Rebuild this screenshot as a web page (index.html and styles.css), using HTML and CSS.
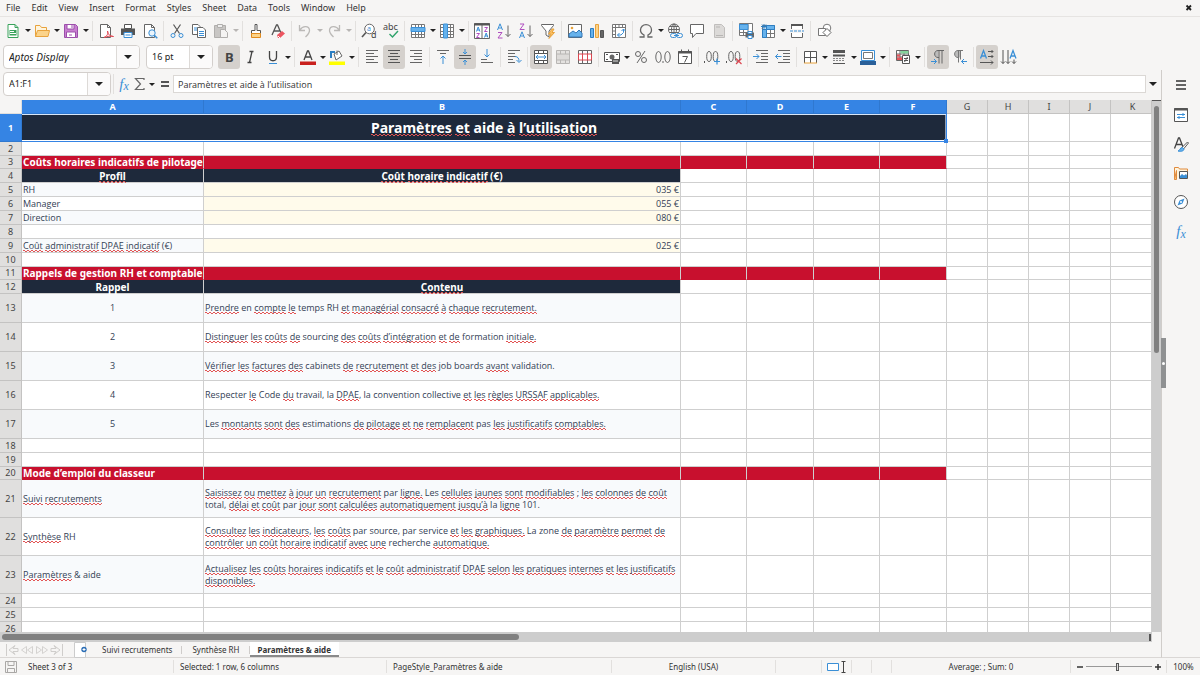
FILE: index.html
```html
<!DOCTYPE html>
<html lang="en">
<head>
<meta charset="utf-8">
<meta name="viewport" content="width=device-width, initial-scale=1">
<title>Paramètres &amp; aide</title>
<link rel="stylesheet" href="styles.css">
</head>
<body>
<div class="app">
<nav class="menubar" aria-label="Menu">
<button>File</button><button>Edit</button><button>View</button><button>Insert</button><button>Format</button><button>Styles</button><button>Sheet</button><button>Data</button><button>Tools</button><button>Window</button><button>Help</button>
<button class="close" aria-label="Close document"><svg viewBox="0 0 8 8" width="8" height="8"><path d="M1.500 1.500l4.500 4.500M6 1.500L1.500 6" stroke="#222" stroke-width="1.800"/></svg></button>
</nav>

<div class="toolbar" role="toolbar" aria-label="Standard">
<span class="split"><button class="tool" aria-label="New"><svg viewBox="0 0 16 16"><path d="M3 1.500h7l3 3v10H3z" fill="#fff" stroke="#3aa35c"/><path d="M10 1.500v3h3" fill="none" stroke="#3aa35c"/><path d="M4.500 7h7v5.500h-7z" fill="#3aa35c"/><path d="M5 8.500h4M5 10.500h6" stroke="#fff"/></svg></button><button class="caret" aria-label="New options"></button></span>
<span class="split"><button class="tool" aria-label="Open"><svg viewBox="0 0 16 16"><path d="M1.500 13.500v-11h4.500l1.500 2h5v3" fill="#fff4dc" stroke="#e8a33d"/><path d="M3.500 7.500h12l-1.500 6H1.500z" fill="#fbd38a" stroke="#e8a33d"/></svg></button><button class="caret" aria-label="Open options"></button></span>
<span class="split"><button class="tool" aria-label="Save"><svg viewBox="0 0 16 16"><path d="M1.500 1.500h11l2 2v11h-13z" fill="#c77ed0" stroke="#9c4fab"/><path d="M4 1.500h7v4.500H4zM3.500 9h9v5.500h-9z" fill="#fff" stroke="#9c4fab"/><path d="M9 2v3M6 12h3" stroke="#9c4fab"/></svg></button><button class="caret" aria-label="Save options"></button></span>
<span class="sep"></span>
<button class="tool" aria-label="Export as PDF"><svg viewBox="0 0 16 16"><path d="M2.500 1.500h7l3 3v10h-10z" fill="#fff" stroke="#666"/><path d="M9.500 1.500v3h3" fill="none" stroke="#666"/><path d="M6 14.500c4-2 4-4 3.500-6.500 1 4 2 5 6 5.500-3-1-6 0-9.500 1z" fill="#fff" stroke="#e0444f"/></svg></button>
<button class="tool" aria-label="Print"><svg viewBox="0 0 16 16"><path d="M4.500 1.500h7v4h-7z" fill="#fff" stroke="#555"/><path d="M1 5.500h14v6.500H1z" fill="#555"/><path d="M4 9.500h8v5H4z" fill="#fff" stroke="#3a8fd6"/><path d="M5.500 12h5" stroke="#3a8fd6"/></svg></button>
<button class="tool" aria-label="Print preview"><svg viewBox="0 0 16 16"><path d="M2.500 1.500h7l3 3v10h-10z" fill="#fff" stroke="#666"/><path d="M9.500 1.500v3h3" fill="none" stroke="#666"/><circle cx="10" cy="10" r="3.200" fill="#eaf4fc" stroke="#3a8fd6"/><path d="M12.300 12.300l3 3" stroke="#3a8fd6" stroke-width="1.500"/></svg></button>
<span class="sep"></span>
<button class="tool" aria-label="Cut"><svg viewBox="0 0 16 16"><path d="M4.500 1.500l6 9M11.500 1.500l-6 9" stroke="#555" stroke-width="1.200"/><circle cx="4" cy="12.500" r="2" fill="none" stroke="#3a8fd6"/><circle cx="12" cy="12.500" r="2" fill="none" stroke="#3a8fd6"/></svg></button>
<button class="tool" aria-label="Copy"><svg viewBox="0 0 16 16"><path d="M1.500 1.500h5.500l2 2v8h-7.500z" fill="#fff" stroke="#666"/><path d="M3 5h5M3 7h5" stroke="#3a8fd6"/><path d="M6.500 4.500h5.500l2.500 2.500v7.500h-8z" fill="#fff" stroke="#666"/><path d="M8 8.500h5M8 10.500h5M8 12.500h5" stroke="#3a8fd6"/></svg></button>
<span class="split off"><button class="tool" aria-label="Paste"><svg viewBox="0 0 16 16"><path d="M1.500 2.500h11v12h-11z" fill="#c8c6c4" stroke="#b0aeac"/><path d="M4.500 1.500h5v3h-5z" fill="#eee" stroke="#b0aeac"/><path d="M7.500 6.500h4l3 3v5h-7z" fill="#f4f3f2" stroke="#b0aeac"/></svg></button><button class="caret" aria-label="Paste options"></button></span>
<span class="sep"></span>
<button class="tool" aria-label="Clone formatting"><svg viewBox="0 0 16 16"><path d="M7 1.500h2v6h3.500v3h-9v-3H7z" fill="#fff" stroke="#555"/><path d="M3.500 10.500h9v4h-9z" fill="#fbd38a" stroke="#e08a1e"/></svg></button>
<button class="tool" aria-label="Clear direct formatting"><svg viewBox="0 0 16 16"><path d="M2 12L6.500 2h1L11 10M4 8h5.500" fill="none" stroke="#555" stroke-width="1.300"/><path d="M7 12l5-4 3 2.500-5 4.500H8z" fill="#ec5560"/><path d="M8 13l2 2" stroke="#fff"/></svg></button>
<span class="sep"></span>
<span class="split off"><button class="tool" aria-label="Undo"><svg viewBox="0 0 16 16"><path d="M2.500 2v5.500H8M3 7c3-5 9-4 9.500 0 .3 3-2 5-4 7" fill="none" stroke="#bbb9b7" stroke-width="1.300"/></svg></button><button class="caret" aria-label="Undo history"></button></span>
<span class="split off"><button class="tool" aria-label="Redo"><svg viewBox="0 0 16 16"><path d="M13.500 2v5.500H8M13 7C10 2 4 3 3.500 7c-.3 3 2 5 4 7" fill="none" stroke="#bbb9b7" stroke-width="1.300"/></svg></button><button class="caret" aria-label="Redo history"></button></span>
<span class="sep"></span>
<button class="tool" aria-label="Find and replace"><svg viewBox="0 0 16 16"><circle cx="8.500" cy="6" r="4.800" fill="#fff" stroke="#666"/><path d="M5 9.500L1 14" stroke="#555" stroke-width="1.600"/><text x="6" y="8" class="ic-s blue">a</text><text x="10" y="15" class="ic-m">d</text></svg></button>
<button class="tool" aria-label="Spelling"><svg viewBox="0 0 16 16"><text x="0" y="7" class="ic-m">abc</text><path d="M6.500 11l3 3L15 8" fill="none" stroke="#2fa36b" stroke-width="1.400"/></svg></button>
<span class="sep"></span>
<span class="split"><button class="tool" aria-label="Row"><svg viewBox="0 0 16 16"><path d="M1.500 1.500h13v13h-13zM1.500 11.500h13M5.500 1.500v13M8.500 1.500v13M11.500 1.500v13" fill="#fff" stroke="#777"/><path d="M1 4.500h14v4H1z" fill="#66b2ec" stroke="#3a8fd6"/></svg></button><button class="caret" aria-label="Row options"></button></span>
<span class="split"><button class="tool" aria-label="Column"><svg viewBox="0 0 16 16"><path d="M1.500 1.500h13v13h-13zM1.500 4.500h13M1.500 8.500h13M1.500 11.500h13M11.500 1.500v13" fill="#fff" stroke="#777"/><path d="M4.500 1h4v14h-4z" fill="#66b2ec" stroke="#3a8fd6"/></svg></button><button class="caret" aria-label="Column options"></button></span>
<span class="sep"></span>
<button class="tool" aria-label="Sort"><svg viewBox="0 0 16 16"><path d="M.5.500h15v15H.5zM8 2v13.500" fill="#fff" stroke="#666"/><path d="M0 1.500h16" stroke="#555" stroke-width="2"/><path d="M2.500 8.500L4.200 4l1.700 4.500M3 7h2.500M10.500 14.500l1.700-4.500 1.700 4.500M11 13h2.500" fill="none" stroke="#3a8fd6"/><path d="M2.500 10.500h3l-3 4h3M10.500 4.500h3l-3 4h3" fill="none" stroke="#b04fc0"/></svg></button>
<button class="tool" aria-label="Sort ascending"><svg viewBox="0 0 16 16"><path d="M1.500 7L4 .8 6.500 7M2.500 5h3" fill="none" stroke="#3a8fd6"/><path d="M2 9.500h4l-4 5.500h4.500" fill="none" stroke="#b04fc0"/><path d="M12 2.500v11M9.500 11l2.500 2.500 2.500-2.500" fill="none" stroke="#666"/></svg></button>
<button class="tool" aria-label="Sort descending"><svg viewBox="0 0 16 16"><path d="M2 1h4L2 6.500h4.500" fill="none" stroke="#b04fc0"/><path d="M1.500 15L4 8.800 6.500 15M2.500 13h3" fill="none" stroke="#3a8fd6"/><path d="M12 2.500v11M9.500 11l2.500 2.500 2.500-2.500" fill="none" stroke="#666"/></svg></button>
<button class="tool" aria-label="AutoFilter"><svg viewBox="0 0 16 16"><path d="M1.500 1.500h12v1L9 8v6l-3-2V8L1.500 2.500z" fill="#fff" stroke="#666"/><path d="M12 6l-3.500 5h2.500L9 15.500l5.500-6H12l2-3.500z" fill="#fbc063" stroke="#e8a33d"/></svg></button>
<span class="sep"></span>
<button class="tool" aria-label="Insert image"><svg viewBox="0 0 16 16"><path d="M1.500 1.500h13v13h-13z" fill="#fff" stroke="#666"/><circle cx="5" cy="5" r="1.300" fill="#e8a33d"/><path d="M2 14v-3l4-3 3 2 3-3 3 3v4z" fill="#66b2ec" stroke="#3478b8"/></svg></button>
<button class="tool" aria-label="Insert chart"><svg viewBox="0 0 16 16"><path d="M1.500 5.500h3v9h-3z" fill="#66b2ec" stroke="#2d7ec2"/><path d="M6.500 1.500h3v13h-3z" fill="#fbd38a" stroke="#e8a33d"/><path d="M11.500 7.500h3v7h-3z" fill="#666" stroke="#555"/></svg></button>
<button class="tool" aria-label="Pivot table"><svg viewBox="0 0 16 16"><path d="M1.500 1.500h13v13h-13zM4.500 1.500v13M1.500 4.500h13M8 1.500v3M11.500 1.500v3M1.500 8h3M1.500 11.500h3" fill="#fff" stroke="#777"/><path d="M6.500 12h3.500l2.500-2.500V6M8.500 10l-2 2 2 2M10.500 8l2-2 2 2" fill="none" stroke="#3a8fd6"/></svg></button>
<span class="sep"></span>
<span class="split"><button class="tool" aria-label="Special character"><svg viewBox="0 0 16 16"><path d="M1.500 14h4.500v-2C3 10.500 2.500 8.500 2.500 7c0-3 2.300-5.300 5.500-5.300S13.500 4 13.500 7c0 1.500-.5 3.500-3.500 5v2h4.500" fill="none" stroke="#666" stroke-width="1.300"/></svg></button><button class="caret" aria-label="Special character options"></button></span>
<button class="tool" aria-label="Hyperlink"><svg viewBox="0 0 16 16"><circle cx="7" cy="6.500" r="5.500" fill="#fff" stroke="#666"/><path d="M1.500 6.500h11M7 1v11M2.500 3.500h9M2.500 9.500h9" stroke="#666"/><ellipse cx="7" cy="6.500" rx="2.500" ry="5.500" fill="none" stroke="#666"/><rect x="3" y="10" width="13" height="5" fill="#f6f5f4"/><rect x="3.500" y="10.500" width="6" height="4" rx="2" fill="none" stroke="#3a8fd6"/><rect x="9.500" y="10.500" width="6" height="4" rx="2" fill="none" stroke="#3a8fd6"/><path d="M7 12.500h5" stroke="#3a8fd6"/></svg></button>
<button class="tool" aria-label="Comment"><svg viewBox="0 0 16 16"><path d="M1.500 1.500h13v9H7l-3.500 4v-4h-2z" fill="#fff" stroke="#666"/></svg></button>
<button class="tool off" aria-label="Headers and footers"><svg viewBox="0 0 16 16"><path d="M3.500 1.500h7l3 3v10h-10z" fill="#dcdad8" stroke="#c0bebc"/><path d="M5 4h4M5 12.500h7" stroke="#b8b6b4"/></svg></button>
<span class="sep"></span>
<button class="tool" aria-label="Define print area"><svg viewBox="0 0 16 16"><path d="M1.500.500h13v12h-13zM5.500.500v12M10 .5v12M1.500 9.500h13" fill="#fff" stroke="#777"/><path d="M1.500 1.500h8.500v5H1.500z" fill="#66b2ec" stroke="#3a8fd6"/><path d="M7.500 9.500h8.500v5H7.500z" fill="#666"/><path d="M10 8.500h4v2h-4zM10 12.500h4v3h-4z" fill="#fff" stroke="#3a8fd6"/></svg></button>
<span class="split"><button class="tool" aria-label="Freeze rows and columns"><svg viewBox="0 0 16 16"><path d="M2.500 2.500h12v12h-12zM6.500 6.500h8M6.500 10.500h8M10.500 2.500v12" fill="#fff" stroke="#777"/><path d="M2.500 6.500h4v8h-4zM6.500 2.500h8v4h-8z" fill="#66b2ec" stroke="#2d7ec2"/><path d="M4 1v5M1 3.500h5M2 1.500l4 4M6 1.500l-4 4" stroke="#2d7ec2"/></svg></button><button class="caret" aria-label="Freeze options"></button></span>
<button class="tool" aria-label="Split window"><svg viewBox="0 0 16 16"><path d="M2.500 6V1.500h11V6M2.500 10v4.500h11V10" fill="#fff" stroke="#666"/><path d="M2 2h12" stroke="#555" stroke-width="2"/><path d="M1 8h14" stroke="#3a8fd6" stroke-dasharray="3 1"/></svg></button>
<span class="sep"></span>
<button class="tool" aria-label="Show draw functions"><svg viewBox="0 0 16 16"><circle cx="11" cy="5" r="3.800" fill="#fff" stroke="#777"/><path d="M2.500 5.500h7v7h-7z" fill="#fff" stroke="#777"/><path d="M11 5.500l4 4-4 4-4-4z" fill="#fff" stroke="#666"/></svg></button>
</div>

<div class="toolbar second" role="toolbar" aria-label="Formatting">
<span class="combo font"><input aria-label="Font name" value="Aptos Display"><button aria-label="Choose font"></button></span>
<span class="combo size"><input aria-label="Font size" value="16 pt"><button aria-label="Choose size"></button></span>
<button class="tool on" aria-label="Bold"><svg viewBox="0 0 16 16"><text x="4" y="13" class="ic-l bold">B</text></svg></button>
<button class="tool" aria-label="Italic"><svg viewBox="0 0 16 16"><path d="M6.500 2.500h4M4.500 13.500h4M9 2.500l-2.500 11" stroke="#444" stroke-width="1.300"/></svg></button>
<span class="split"><button class="tool" aria-label="Underline"><svg viewBox="0 0 16 16"><path d="M4.500 2v6c0 5 7 5 7 0V2" fill="none" stroke="#444" stroke-width="1.300"/><path d="M4 14.500h8" stroke="#3a8fd6"/></svg></button><button class="caret" aria-label="Underline options"></button></span>
<span class="sep"></span>
<span class="split"><button class="tool" aria-label="Font color"><svg viewBox="0 0 16 16"><path d="M4 11l3.500-9h1L12 11M5.500 8h5" fill="none" stroke="#444" stroke-width="1.300"/><path d="M0 12.500h16v3.500H0z" fill="#c9211e"/></svg></button><button class="caret" aria-label="Font color options"></button></span>
<span class="split"><button class="tool" aria-label="Background color"><svg viewBox="0 0 16 16"><path d="M5 5l5-3 3 5-6 4z" fill="#fff" stroke="#666"/><path d="M8 6V1.500" stroke="#666"/><path d="M2 9V3h4" fill="none" stroke="#2d7ec2" stroke-width="2"/><path d="M0 12.500h16v3.500H0z" fill="#ff0"/></svg></button><button class="caret" aria-label="Background color options"></button></span>
<span class="sep"></span>
<button class="tool" aria-label="Align left"><svg viewBox="0 0 16 16"><path d="M2 1.500h12M2 4.500h8M2 7.500h12M2 10.500h8M2 13.500h12" stroke="#666"/></svg></button>
<button class="tool on" aria-label="Align center"><svg viewBox="0 0 16 16"><path d="M2 1.500h12M4 4.500h8M2 7.500h12M4 10.500h8M2 13.500h12" stroke="#555"/></svg></button>
<button class="tool" aria-label="Align right"><svg viewBox="0 0 16 16"><path d="M2 1.500h12M6 4.500h8M2 7.500h12M6 10.500h8M2 13.500h12" stroke="#666"/></svg></button>
<span class="sep"></span>
<button class="tool" aria-label="Align top"><svg viewBox="0 0 16 16"><path d="M2 1.500h12M5 4.500h6" stroke="#666"/><path d="M8 15V7M5.500 9.500L8 7l2.500 2.500" fill="none" stroke="#3a8fd6"/></svg></button>
<button class="tool on" aria-label="Center vertically"><svg viewBox="0 0 16 16"><path d="M2 6.500h12M2 9.500h12" stroke="#555"/><path d="M8 0v5M6 3l2 2 2-2M8 16v-5M6 13l2-2 2 2" fill="none" stroke="#3a8fd6"/></svg></button>
<button class="tool" aria-label="Align bottom"><svg viewBox="0 0 16 16"><path d="M2 10.500h6M2 13.500h12" stroke="#666"/><path d="M8 0v8M5.500 5.500L8 8l2.500-2.500" fill="none" stroke="#3a8fd6"/></svg></button>
<span class="sep"></span>
<button class="tool" aria-label="Wrap text"><svg viewBox="0 0 16 16"><path d="M2 1.500h12M2 4.500h7M2 7.500h8M2 10.500h5M2 13.500h7" stroke="#666"/><path d="M9 7.500c3 0 4 2 4 5M10.500 11l2.500 2.500 2.500-2.500" fill="none" stroke="#3a8fd6"/></svg></button>
<span class="sep"></span>
<button class="tool on" aria-label="Merge and center cells"><svg viewBox="0 0 16 16"><path d="M1.500 1.500h13v13h-13zM5.500 1.500v13M10.500 1.500v13" fill="#fff" stroke="#555"/><path d="M1.500 4.500h13v7h-13z" fill="#fff" stroke="#555"/><path d="M3 8h10M5 6L3 8l2 2M11 6l2 2-2 2" fill="none" stroke="#3a8fd6"/></svg></button>
<button class="tool off" aria-label="Merge cells"><svg viewBox="0 0 16 16"><path d="M1.500 1.500h13v13h-13zM5.500 1.500v13M10.500 1.500v13" fill="#e4e2e0" stroke="#b8b6b4"/><path d="M1.500 5h13v6h-13z" fill="#dddbd9" stroke="#b8b6b4"/></svg></button>
<button class="tool" aria-label="Unmerge cells"><svg viewBox="0 0 16 16"><path d="M1.500 1.500h13v13h-13zM5.500 1.500v13M10.500 1.500v13" fill="#fff" stroke="#666"/><path d="M1.500 5h13v6h-13zM5.500 5v6M10.500 5v6" fill="#fff" stroke="#dc4650"/></svg></button>
<span class="sep"></span>
<span class="split"><button class="tool" aria-label="Format as currency"><svg viewBox="0 0 16 16"><path d="M.5 3.500h15v9H.5z" fill="#fff" stroke="#555"/><path d="M2 5.500h2M12 5.500h2M2 10.500h2" stroke="#555"/><circle cx="8" cy="8" r="2.500" fill="#666"/><path d="M8 10h7v5H8z" fill="#555"/><path d="M9 12h5" stroke="#ddd"/></svg></button><button class="caret" aria-label="Currency options"></button></span>
<button class="tool" aria-label="Format as percent"><svg viewBox="0 0 16 16"><circle cx="5" cy="5" r="2.500" fill="none" stroke="#666"/><circle cx="11" cy="11" r="2.500" fill="none" stroke="#666"/><path d="M12 2L4 14" stroke="#666"/></svg></button>
<button class="tool" aria-label="Format as number"><svg viewBox="0 0 16 16"><ellipse cx="3.500" cy="8" rx="2.700" ry="5.500" fill="none" stroke="#666"/><ellipse cx="12.500" cy="8" rx="2.700" ry="5.500" fill="none" stroke="#666"/><path d="M8 12v2" stroke="#666"/></svg></button>
<button class="tool" aria-label="Format as date"><svg viewBox="0 0 16 16"><path d="M1.500 2.500h13v12h-13z" fill="#fff" stroke="#555"/><path d="M1 3.500h14" stroke="#555" stroke-width="2"/><path d="M4.500.500v3M11.500.500v3" stroke="#555"/><path d="M5.500 7.500h5l-3 6" fill="none" stroke="#555"/></svg></button>
<span class="sep"></span>
<button class="tool" aria-label="Add decimal place"><svg viewBox="0 0 16 16"><path d="M.5 12v2" stroke="#555"/><ellipse cx="5" cy="7.500" rx="2.300" ry="5" fill="none" stroke="#666"/><ellipse cx="11.500" cy="7.500" rx="2.300" ry="5" fill="none" stroke="#666"/><path d="M13 9.500v6M10 12.500h6" stroke="#3a8fd6" stroke-width="1.200"/></svg></button>
<button class="tool" aria-label="Delete decimal place"><svg viewBox="0 0 16 16"><path d="M.5 12v2" stroke="#555"/><ellipse cx="5" cy="7.500" rx="2.300" ry="5" fill="none" stroke="#666"/><ellipse cx="11.500" cy="7.500" rx="2.300" ry="5" fill="none" stroke="#666"/><path d="M10 9.500l5.500 5.500M15.500 9.500L10 15" stroke="#dc4650" stroke-width="1.200"/></svg></button>
<span class="sep"></span>
<button class="tool" aria-label="Increase indent"><svg viewBox="0 0 16 16"><path d="M3 1.500h12M8 4.500h7M8 7.500h7M8 10.500h7M3 13.500h12" stroke="#666"/><path d="M0 7.500h6M3.500 5L6 7.500 3.500 10" fill="none" stroke="#3a8fd6"/></svg></button>
<button class="tool" aria-label="Decrease indent"><svg viewBox="0 0 16 16"><path d="M3 1.500h12M8 4.500h7M8 7.500h7M8 10.500h7M3 13.500h12" stroke="#666"/><path d="M6.500 7.500h-6M3 5L.5 7.500 3 10" fill="none" stroke="#3a8fd6"/></svg></button>
<span class="sep"></span>
<span class="split"><button class="tool" aria-label="Borders"><svg viewBox="0 0 16 16"><path d="M2.500 14V2.500h12V14M8.500 2v12M2.500 8.500h12" fill="#fff" stroke="#555"/><path d="M2 14h13" stroke="#e8a33d"/></svg></button><button class="caret" aria-label="Border options"></button></span>
<span class="split"><button class="tool" aria-label="Border style"><svg viewBox="0 0 16 16"><path d="M2 2.500h12" stroke="#555" stroke-width="3"/><path d="M2 6.500h12" stroke="#555" stroke-width="2"/><path d="M2 9.500h12M2 11.500h12" stroke="#888" stroke-dasharray="2 1"/><path d="M2 14.500h12" stroke="#555"/></svg></button><button class="caret" aria-label="Border style options"></button></span>
<span class="split"><button class="tool" aria-label="Border color"><svg viewBox="0 0 16 16"><path d="M1.500 1.500h13v10h-13z" fill="#fff" stroke="#3a8fd6"/><path d="M3.500 3.500h9v6h-9z" fill="#fff" stroke="#777"/><path d="M0 12h16v4H0z" fill="#2a6099"/></svg></button><button class="caret" aria-label="Border color options"></button></span>
<span class="sep"></span>
<span class="split"><button class="tool" aria-label="Conditional formatting"><svg viewBox="0 0 16 16"><path d="M1.500 1.500h12v10h-12zM5 1.500v10M9 1.500v10M1.500 5h12M1.500 8h12" fill="#fff" stroke="#666"/><path d="M5.500 2h8v2.500h-8z" fill="#83d39b"/><path d="M2 5.500h3v2H2zM2 8.500h5v2.500H2z" fill="#e8555c"/><path d="M7.500 6.500h7v8h-7z" fill="#fff" stroke="#555"/><path d="M9 9.500h4M9 11.500h4M12.500 8l-3 5" stroke="#555"/></svg></button><button class="caret" aria-label="Conditional formatting options"></button></span>
<span class="sep"></span>
<button class="tool on" aria-label="Left to right"><svg viewBox="0 0 16 16"><path d="M8 8.500c-4.500 0-4.500-7 0-7" fill="#bbb"/><path d="M14 1.500H8c-4.500 0-4.500 7 0 7h1M9 1.500v13M12 1.500v13" fill="none" stroke="#666"/><path d="M1 12.500h5.500M4 10l2.500 2.500L4 15" fill="none" stroke="#3a8fd6"/></svg></button>
<button class="tool" aria-label="Right to left"><svg viewBox="0 0 16 16"><path d="M6 8.500c-4.500 0-4.500-7 0-7h2v7z" fill="#bbb"/><path d="M11 1.500H6c-4.500 0-4.500 7 0 7h1M6.500 1.500v12M8.500 1.500v9" fill="none" stroke="#777"/><path d="M15 12.500H9.500M12 10l-2.500 2.500L12 15" fill="none" stroke="#3a8fd6"/></svg></button>
<span class="sep"></span>
<button class="tool on" aria-label="Text direction left to right"><svg viewBox="0 0 16 16"><path d="M1.500 9.500L4.500 1.500l3 8M2.500 7h4" fill="none" stroke="#3a8fd6" stroke-width="1.300"/><path d="M9 2.500h5M12.500 1L14 2.500 12.500 4M9 7.500h5M12.500 6L14 7.500 12.500 9M1 13.500h13M12 11.500l2 2-2 2" fill="none" stroke="#555"/></svg></button>
<button class="tool" aria-label="Text direction top to bottom"><svg viewBox="0 0 16 16"><path d="M9 9.500l3-8 3 8M10 7h4" fill="none" stroke="#3a8fd6" stroke-width="1.300"/><path d="M2 1v13.500M0 12.500l2 2 2-2M7 1v13.500M5 12.500l2 2 2-2M13 10.500v4M11 12.500l2 2 2-2" fill="none" stroke="#555"/></svg></button>
</div>

<div class="work">
<main class="document">
<div class="formula">
<span class="combo name"><input aria-label="Name box" value="A1:F1"><button aria-label="Named ranges"></button></span>
<span class="sep"></span>
<button class="tool fx" aria-label="Function wizard"><i>f</i><i class="sub">x</i></button>
<button class="tool sum" aria-label="Select function"><svg viewBox="0 0 16 16"><path d="M12 4V2.500H3.500L8.500 8l-5 5.500H12V12" fill="none" stroke="#666" stroke-width="1.200"/></svg></button><button class="caret" aria-label="Function options"></button>
<button class="tool eq" aria-label="Formula"><svg viewBox="0 0 16 16"><path d="M4 6h8M4 10h8" stroke="#555" stroke-width="1.800"/></svg></button>
<input class="line" aria-label="Input line" value="Paramètres et aide à l’utilisation">
<button class="expand" aria-label="Expand formula bar"></button>
</div>
<div class="sheet">
<div class="grid">
<table>
<colgroup><col class="c-n"><col class="c-a"><col class="c-b"><col class="c-w"><col class="c-x"><col class="c-w"><col class="c-x"><col class="c-s"><col class="c-s"><col class="c-s"><col class="c-s"><col></colgroup>
<thead><tr><td class="corner"></td><th class="sel">A</th><th class="sel">B</th><th class="sel">C</th><th class="sel">D</th><th class="sel">E</th><th class="sel">F</th><th>G</th><th>H</th><th>I</th><th>J</th><th><span class="last">K</span></th></tr></thead>
<tbody>
<tr class="r-title"><th class="sel">1</th><td colspan="6" class="title"><u>Paramètres</u> <u>et</u> aide <u>à</u> <u>l’utilisation</u><span class="handle"></span></td><td></td><td></td><td></td><td></td><td></td></tr>
<tr><th>2</th><td></td><td></td><td></td><td></td><td></td><td></td><td></td><td></td><td></td><td></td><td></td></tr>
<tr class="section"><th>3</th><td>Coûts horaires indicatifs de pilotage</td><td></td><td></td><td></td><td></td><td></td><td></td><td></td><td></td><td></td><td></td></tr>
<tr class="heads"><th>4</th><td><u>Profil</u></td><td><u>Coût</u> <u>horaire</u> <u>indicatif</u> (€)</td><td></td><td></td><td></td><td></td><td></td><td></td><td></td><td></td><td></td></tr>
<tr class="tint"><th>5</th><td>RH</td><td class="entry">035 €</td><td></td><td></td><td></td><td></td><td></td><td></td><td></td><td></td><td></td></tr>
<tr><th>6</th><td>Manager</td><td class="entry">055 €</td><td></td><td></td><td></td><td></td><td></td><td></td><td></td><td></td><td></td></tr>
<tr class="tint"><th>7</th><td>Direction</td><td class="entry">080 €</td><td></td><td></td><td></td><td></td><td></td><td></td><td></td><td></td><td></td></tr>
<tr><th>8</th><td></td><td></td><td></td><td></td><td></td><td></td><td></td><td></td><td></td><td></td><td></td></tr>
<tr class="tint"><th>9</th><td><u>Coût</u> <u>administratif</u> <u>DPAE</u> <u>indicatif</u> (€)</td><td class="entry">025 €</td><td></td><td></td><td></td><td></td><td></td><td></td><td></td><td></td><td></td></tr>
<tr><th>10</th><td></td><td></td><td></td><td></td><td></td><td></td><td></td><td></td><td></td><td></td><td></td></tr>
<tr class="section"><th>11</th><td>Rappels de gestion RH et comptable</td><td></td><td></td><td></td><td></td><td></td><td></td><td></td><td></td><td></td><td></td></tr>
<tr class="heads"><th>12</th><td>Rappel</td><td><u>Contenu</u></td><td></td><td></td><td></td><td></td><td></td><td></td><td></td><td></td><td></td></tr>
<tr class="note tint"><th>13</th><td>1</td><td><u>Prendre</u> en <u>compte</u> <u>le</u> temps RH <u>et</u> <u>managérial</u> <u>consacré</u> <u>à</u> <u>chaque</u> <u>recrutement.</u></td><td></td><td></td><td></td><td></td><td></td><td></td><td></td><td></td><td></td></tr>
<tr class="note"><th>14</th><td>2</td><td><u>Distinguer</u> <u>les</u> <u>coûts</u> <u>de</u> sourcing <u>des</u> <u>coûts</u> <u>d’intégration</u> <u>et</u> <u>de</u> formation <u>initiale.</u></td><td></td><td></td><td></td><td></td><td></td><td></td><td></td><td></td><td></td></tr>
<tr class="note tint"><th>15</th><td>3</td><td><u>Vérifier</u> <u>les</u> <u>factures</u> <u>des</u> cabinets <u>de</u> <u>recrutement</u> <u>et</u> <u>des</u> job boards <u>avant</u> validation.</td><td></td><td></td><td></td><td></td><td></td><td></td><td></td><td></td><td></td></tr>
<tr class="note"><th>16</th><td>4</td><td>Respecter <u>le</u> Code <u>du</u> travail, la <u>DPAE</u>, la convention collective <u>et</u> <u>les</u> <u>règles</u> <u>URSSAF</u> <u>applicables.</u></td><td></td><td></td><td></td><td></td><td></td><td></td><td></td><td></td><td></td></tr>
<tr class="note tint"><th>17</th><td>5</td><td>Les <u>montants</u> <u>sont</u> <u>des</u> estimations <u>de</u> <u>pilotage</u> <u>et</u> <u>ne</u> <u>remplacent</u> pas <u>les</u> <u>justificatifs</u> <u>comptables.</u></td><td></td><td></td><td></td><td></td><td></td><td></td><td></td><td></td><td></td></tr>
<tr><th>18</th><td></td><td></td><td></td><td></td><td></td><td></td><td></td><td></td><td></td><td></td><td></td></tr>
<tr><th>19</th><td></td><td></td><td></td><td></td><td></td><td></td><td></td><td></td><td></td><td></td><td></td></tr>
<tr class="section"><th>20</th><td>Mode d’emploi du classeur</td><td></td><td></td><td></td><td></td><td></td><td></td><td></td><td></td><td></td><td></td></tr>
<tr class="guide tint"><th>21</th><td><u>Suivi</u> <u>recrutements</u></td><td><u>Saisissez</u> <u>ou</u> <u>mettez</u> <u>à</u> <u>jour</u> <u>un</u> <u>recrutement</u> par <u>ligne.</u> Les <u>cellules</u> <u>jaunes</u> <u>sont</u> <u>modifiables</u> ; <u>les</u> <u>colonnes</u> <u>de</u> <u>coût</u> total, <u>délai</u> <u>et</u> <u>coût</u> par <u>jour</u> <u>sont</u> <u>calculées</u> <u>automatiquement</u> <u>jusqu’à</u> la <u>ligne</u> 101.</td><td></td><td></td><td></td><td></td><td></td><td></td><td></td><td></td><td></td></tr>
<tr class="guide"><th>22</th><td><u>Synthèse</u> RH</td><td><u>Consultez</u> <u>les</u> <u>indicateurs</u>, <u>les</u> <u>coûts</u> par source, par service <u>et</u> <u>les</u> <u>graphiques.</u> La zone <u>de</u> <u>paramètre</u> <u>permet</u> <u>de</u> <br><u>contrôler</u> <u>un</u> <u>coût</u> <u>horaire</u> <u>indicatif</u> <u>avec</u> <u>une</u> recherche <u>automatique.</u></td><td></td><td></td><td></td><td></td><td></td><td></td><td></td><td></td><td></td></tr>
<tr class="guide tint"><th>23</th><td><u>Paramètres</u> &amp; aide</td><td><u>Actualisez</u> <u>les</u> <u>coûts</u> <u>horaires</u> <u>indicatifs</u> <u>et</u> <u>le</u> <u>coût</u> <u>administratif</u> <u>DPAE</u> <u>selon</u> <u>les</u> <u>pratiques</u> <u>internes</u> <u>et</u> <u>les</u> <u>justificatifs</u> <u>disponibles.</u></td><td></td><td></td><td></td><td></td><td></td><td></td><td></td><td></td><td></td></tr>
<tr><th>24</th><td></td><td></td><td></td><td></td><td></td><td></td><td></td><td></td><td></td><td></td><td></td></tr>
<tr><th>25</th><td></td><td></td><td></td><td></td><td></td><td></td><td></td><td></td><td></td><td></td><td></td></tr>
<tr><th>26</th><td></td><td></td><td></td><td></td><td></td><td></td><td></td><td></td><td></td><td></td><td></td></tr>
</tbody>
</table>
</div>
<div class="vbar"><span></span></div>
</div>
<div class="hbar"><span></span><i></i></div>
<div class="tabs">
<div class="tabnav">
<button aria-label="First sheet"><svg viewBox="0 0 14 14"><path d="M1.500 1v12M13 5.500H8l2-3L4 7l6 4.500-2-3h5z" fill="none" stroke="#cfcdcb"/></svg></button>
<button aria-label="Previous sheet"><svg viewBox="0 0 14 14"><path d="M6.500 3.500v7L1.500 7zM12.500 3.500v7L7.500 7z" fill="none" stroke="#d4d2d0"/></svg></button>
<button aria-label="Next sheet"><svg viewBox="0 0 14 14"><path d="M1.500 3.500v7l5-3.500zM7.500 3.500v7l5-3.500z" fill="none" stroke="#d4d2d0"/></svg></button>
<button aria-label="Last sheet"><svg viewBox="0 0 14 14"><path d="M12.500 1v12M1 5.500h5l-2-3L10 7l-6 4.500 2-3H1z" fill="none" stroke="#cfcdcb"/></svg></button>
</div>
<button class="add" aria-label="Add sheet"><svg viewBox="0 0 14 16"><path d="M.5.500h11v15H.5z" fill="#fff" stroke="#ccc"/><circle cx="10" cy="7.500" r="2.700" fill="#2a6db5"/><path d="M10 6v3M8.500 7.500h3" stroke="#fff"/></svg></button>
<button class="tab">Suivi recrutements</button><button class="tab">Synthèse RH</button><button class="tab active">Paramètres &amp; aide</button>
</div>
</main>
<aside class="side">
<button class="grip" aria-label="Hide sidebar"></button>
<button aria-label="Sidebar settings"><svg viewBox="0 0 16 16"><path d="M3 4h10M3 8h10M3 12h10" stroke="#333" stroke-width="1.500"/></svg></button>
<button aria-label="Properties"><svg viewBox="0 0 16 16"><path d="M1.500 1.500h13v13h-13z" fill="#fff" stroke="#555"/><path d="M1 2.500h14" stroke="#555" stroke-width="2"/><path d="M4 7.500h8M4 10.500h8M10 6v3M6 9v3" stroke="#3a8fd6"/></svg></button>
<button aria-label="Styles"><svg viewBox="0 0 16 16"><path d="M1.500 12.500L5.500 2h1l3.500 9M3 8.500h6" fill="none" stroke="#444" stroke-width="1.300"/><path d="M14.500 6L9 11.500l1.500 1.500L15.500 7z" fill="#fff" stroke="#555"/><path d="M9.500 11.500c-3 0-2 3-4.500 3.500 3 .8 6 0 6-2z" fill="#66b2ec" stroke="#3a8fd6"/></svg></button>
<button aria-label="Gallery"><svg viewBox="0 0 16 16"><path d="M1.500 14.500v-12h4l1 1.500h8v3" fill="#fff4dc" stroke="#e08a3d"/><path d="M3.500 5.500v9h-2z" fill="#fbd38a" stroke="#e08a3d"/><path d="M6.500 6.500h8v7h-8z" fill="#fff" stroke="#555"/><path d="M7 13v-2l2-2 2 1.500L13 9l1 1.500V13z" fill="#3a8fd6"/></svg></button>
<button aria-label="Navigator"><svg viewBox="0 0 16 16"><circle cx="8" cy="8" r="6.500" fill="#fff" stroke="#555"/><path d="M11.500 4.500L9.500 9.500l-5 2 2-5z" fill="#3a8fd6"/><circle cx="8" cy="8" r="1" fill="#fff"/></svg></button>
<button class="fx" aria-label="Functions"><i>f</i><i class="sub">x</i></button>
</aside>
</div>

<footer class="status">
<span class="disk"><svg viewBox="0 0 14 14"><path d="M1.500 1.500h11v11h-11zM4 1.500v4h6v-4M3.500 12.500v-4h7v4" fill="none" stroke="#aaa8a6"/></svg></span>
<span class="left">Sheet 3 of 3</span>
<span class="left">Selected: 1 row, 6 columns</span>
<span class="left">PageStyle_Paramètres &amp; aide</span>
<span>English (USA)</span>
<span></span>
<span><svg class="mode" viewBox="0 0 22 12"><path d="M1.500 2.500h11v7h-11z" fill="#fff" stroke="#3a8fd6"/><path d="M17.500 1v10M15.500.500h4M15.500 11.500h4" stroke="#444"/></svg></span>
<span></span>
<span></span>
<span>Average: ; Sum: 0</span>
<span class="zoom"><button aria-label="Zoom out"><svg viewBox="0 0 8 8"><path d="M1 4h6" stroke="#333" stroke-width="1.500"/></svg></button><input type="range" aria-label="Zoom" min="0" max="100" value="49"><button aria-label="Zoom in"><svg viewBox="0 0 8 8"><path d="M1 4h6M4 1v6" stroke="#333" stroke-width="1.500"/></svg></button></span>
<span>100%</span>
</footer>
</div>
</body>
</html>
```
FILE: styles.css
```css
* { box-sizing: border-box; }
body { margin: 0; background: #f6f5f4; color: #333; font: 9px/12px "Noto Sans", "Open Sans", sans-serif; }
button, input { font: inherit; color: inherit; border: 0; background: none; padding: 0; margin: 0; min-width: 0; }
svg { display: block; }
.app { display: flex; flex-direction: column; height: 100vh; overflow: hidden; }

.menubar { display: flex; align-items: center; gap: 11px; height: 17px; padding: 0 7px 0 6px; border-bottom: 1px solid #e6e4e2; flex: none; }
.menubar .close { margin-left: auto; }

.toolbar { display: flex; align-items: center; flex: none; height: 27px; padding-left: 2px; }
.toolbar.second { height: 26px; padding-left: 3px; }
.tool { width: 22px; height: 24px; flex: none; display: flex; align-items: center; justify-content: center; border-radius: 3px; }
.tool svg { width: 16px; height: 16px; flex: none; overflow: visible; }
.tool.on { background: #d5d1cd; }
.split { display: flex; align-items: center; flex: none; }
.caret { width: 7px; height: 20px; flex: none; display: flex; align-items: center; justify-content: center; }
.caret::before, .combo button::before, .expand::before { content: ""; border: 3px solid transparent; border-top-color: #222; border-bottom: 0; }
.combo button::before, .expand::before { border-width: 4px; border-bottom: 0; }
.off .caret::before { border-top-color: #b8b6b4; }
.sep { width: 5px; height: 20px; flex: none; background: linear-gradient(#e2e0de, #e2e0de) center / 1px 100% no-repeat; }
.split + .sep { width: 6px; }

.ic-s { font-size: 7px; fill: #444; }
.ic-m { font-size: 9px; fill: #444; }
.ic-l { font-size: 13px; fill: #444; }
.bold { font-weight: 700; }
.blue { fill: #3a8fd6; }

.combo { display: flex; flex: none; height: 24px; background: #fff; border: 1px solid #d3cfcc; border-radius: 4px; overflow: hidden; }
.combo input { flex: 1; padding-left: 5px; color: #222; }
.combo button { width: 23px; border-left: 1px solid #dddad7; background: #fbfafa; display: flex; align-items: center; justify-content: center; }
.combo.font { width: 137px; margin-right: 6px; }
.combo.font input { font-style: italic; font-size: 10px; }
.combo.size { width: 67px; margin-right: 5px; }
.combo.name { width: 108px; }

.work { display: flex; flex: 1; min-height: 0; }
.document { display: flex; flex-direction: column; flex: 1; min-width: 0; }
.formula { display: flex; align-items: center; flex: none; height: 30px; padding: 1px 3px 3px; }
.fx { color: #3a8fd6; font: 15px/16px "Liberation Serif", serif; }
.fx .sub { font-size: 12px; position: relative; top: 2px; }
.formula .fx, .formula .sum { width: 16px; }
.formula .caret { width: 8px; }
.formula .eq { width: 17px; }
.line { flex: 1; height: 18px; background: #fff; border: 1px solid #dbd8d5; padding-left: 4px; margin-right: 2px; font-family: "Open Sans", "Noto Sans", sans-serif; }
.expand { width: 10px; display: flex; justify-content: center; }

.sheet { display: flex; flex: 1; min-height: 0; }
.grid { flex: 1; min-width: 0; overflow: hidden; background: #fff; }
table { width: 100%; table-layout: fixed; border-collapse: separate; border-spacing: 0; color: #334155; font-family: "Open Sans", "Noto Sans", sans-serif; }
.c-n { width: 22px; } .c-a { width: 182px; } .c-b { width: 477px; } .c-w { width: 66px; } .c-x { width: 67px; } .c-s { width: 41px; }
th, td { height: 14px; padding: 0 1px; border: solid #cfcfcf; border-width: 0 1px 1px 0; vertical-align: middle; text-align: left; white-space: nowrap; }
th { background: #e0dfde; border-color: #c4c3c2; color: #444; font-family: "Noto Sans", sans-serif; font-weight: 400; text-align: center; }
th.sel { background: #3584e4; border-color: #2f78d0; color: #fff; font-weight: 700; }
.corner { background: #f6f5f4; border-color: #e0dfde; }
.last { display: block; width: 41px; }
u {
  text-decoration: none;
  background-image: linear-gradient(90deg, #e25555 2px, transparent 2px), linear-gradient(90deg, #e25555 2px, transparent 2px);
  background-size: 4px 1px;
  background-repeat: repeat-x;
  background-position: 0 calc(100% - 1px), 2px 100%;
}
.r-title th { height: 28px; }
.title { position: relative; background: #1e293b; color: #fff; font: 700 14px/18px "Noto Sans", sans-serif; text-align: center; border-color: #3584e4; box-shadow: inset 0 1px #d8e6f8, inset 0 -1px #fff, inset -1px 0 #8fa0b8; }
.title u { background-position: 0 calc(100% - 2px), 2px calc(100% - 1px); }
.handle { position: absolute; right: -2px; bottom: -2px; width: 4px; height: 4px; background: #3584e4; }
.section th, .section td { height: 13px; }
.section td:nth-child(-n+7) { background: #c8102e; color: #fff; font: 700 10px/12px "Noto Sans", sans-serif; border-bottom-color: #c8102e; }
.heads td:nth-child(-n+3) { background: #1e293b; color: #fff; font: 700 10px/12px "Noto Sans", sans-serif; text-align: center; }
.tint td:nth-child(-n+3) { background: #f8fafc; }
td.entry, .tint td.entry { background: #fffbeb; text-align: right; }
.note td { height: 29px; }
.note td:nth-child(2) { text-align: center; }
.guide td { height: 38px; }
.guide td:nth-child(3) { white-space: normal; }

.vbar { width: 9px; flex: none; background: #cdcdcd; padding: 5px 2px 0; border-top: 1px solid #555; }
.vbar span { display: block; height: 47%; border-radius: 3px; background: #808080; }
.hbar { display: flex; align-items: center; justify-content: space-between; flex: none; height: 10px; margin-right: 9px; padding: 0 1px 0 2px; background: #cdcdcd; }
.hbar span { width: 45%; height: 6px; border-radius: 3px; background: #808080; }
.hbar i { width: 2px; height: 7px; background: #555; }

.tabs { display: flex; align-items: stretch; flex: none; height: 16px; border-bottom: 1px solid #dad7d5; font-size: 8px; }
.tabnav { display: flex; align-items: center; padding-left: 5px; width: 74px; }
.tabnav button { width: 15px; }
.tabnav svg { width: 14px; height: 14px; }
.add { width: 18px; }
.add svg { width: 14px; height: 16px; }
.tab { padding: 0 10px; }
.tab:not(.active) { background: linear-gradient(#cfccca, #cfccca) right center / 1px 8px no-repeat; }
.tab.active { background: #fff; font-weight: 700; padding: 0 8px; box-shadow: inset 0 -2px #8a8a8a; }

.side { position: relative; width: 39px; flex: none; border-left: 1px solid #d0cdca; border-bottom: 1px solid #dad7d5; display: flex; flex-direction: column; align-items: center; padding-top: 7px; }
.side button { height: 16px; margin-bottom: 13px; }
.side button:nth-child(2) { margin-bottom: 14px; }
.side svg { width: 16px; height: 16px; }
.side .grip { position: absolute; left: -1px; top: 268px; width: 5px; height: 50px; background: #8f9192; margin: 0; display: flex; align-items: center; justify-content: center; }
.grip::before { content: ""; width: 3px; height: 3px; border-radius: 2px; background: #fff; }

.status { display: grid; grid-template-columns: 22px 152fr 213fr 225fr 164fr 46px 30px 20px 20px 179fr 96px 33px; align-items: center; flex: none; height: 17px; font-size: 8px; }
.status > span { height: 13px; display: flex; align-items: center; justify-content: center; border-right: 1px solid #e2e0de; white-space: nowrap; }
.status > span:last-child { border: 0; }
.status > .left { justify-content: flex-start; padding-left: 6px; }
.status > .disk { border: 0; }
.disk svg { width: 14px; height: 14px; }
.mode { width: 22px; height: 12px; }
.zoom { gap: 2px; }
.zoom svg { width: 8px; height: 8px; }
.zoom input { appearance: none; width: 66px; height: 9px; background: linear-gradient(#999, #999) center / 100% 1px no-repeat; }
.zoom input::-webkit-slider-thumb { appearance: none; width: 3px; height: 8px; border: 1px solid #555; background: #ddd; }
```
